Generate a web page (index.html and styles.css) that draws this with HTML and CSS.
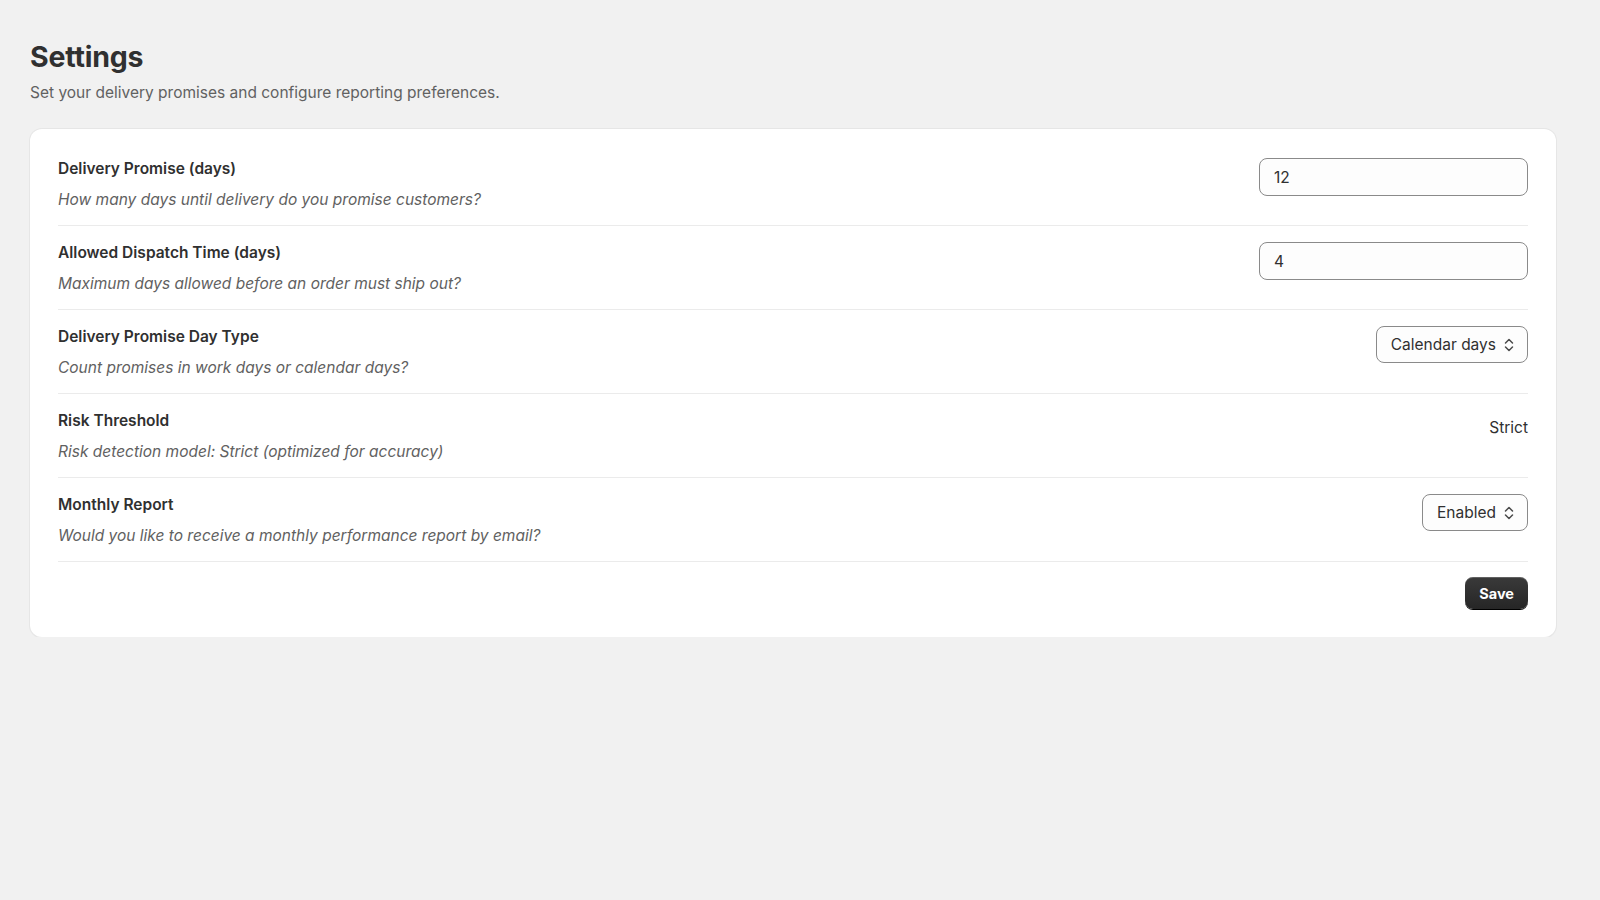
FILE: index.html
```html
<!DOCTYPE html>
<html>
<head>
  <meta charset="UTF-8">
  <title>Settings</title>
  <meta name="viewport" content="width=device-width, initial-scale=1.0">
  <link rel="stylesheet" href="styles.css">
</head>
<body>
  <div class="page">
    <h1>Settings</h1>
    <p class="subtitle">Set your delivery promises and configure reporting preferences.</p>

    <div class="card">
      <div class="row">
        <div class="text">
          <div class="label">Delivery Promise (days)</div>
          <div class="help">How many days until delivery do you promise customers?</div>
        </div>
        <input class="field" type="text" value="12">
      </div>

      <div class="row">
        <div class="text">
          <div class="label">Allowed Dispatch Time (days)</div>
          <div class="help">Maximum days allowed before an order must ship out?</div>
        </div>
        <input class="field" type="text" value="4">
      </div>

      <div class="row">
        <div class="text">
          <div class="label">Delivery Promise Day Type</div>
          <div class="help">Count promises in work days or calendar days?</div>
        </div>
        <button class="select" type="button">Calendar days
          <svg viewBox="0 0 10 14" width="10" height="14"><path d="M1.5 5 5 1.5 8.5 5M1.5 9 5 12.5 8.5 9" fill="none" stroke="#4a4a4a" stroke-width="1.5" stroke-linecap="round" stroke-linejoin="round"/></svg>
        </button>
      </div>

      <div class="row">
        <div class="text">
          <div class="label">Risk Threshold</div>
          <div class="help">Risk detection model: Strict (optimized for accuracy)</div>
        </div>
        <div class="value">Strict</div>
      </div>

      <div class="row">
        <div class="text">
          <div class="label">Monthly Report</div>
          <div class="help">Would you like to receive a monthly performance report by email?</div>
        </div>
        <button class="select" type="button">Enabled
          <svg viewBox="0 0 10 14" width="10" height="14"><path d="M1.5 5 5 1.5 8.5 5M1.5 9 5 12.5 8.5 9" fill="none" stroke="#4a4a4a" stroke-width="1.5" stroke-linecap="round" stroke-linejoin="round"/></svg>
        </button>
      </div>

      <div class="actions">
        <button class="save" type="button">Save</button>
      </div>
    </div>
  </div>
</body>
</html>
```

FILE: styles.css
```css
body { margin: 0; background: #f1f1f1; font-family: Inter, "Noto Sans", sans-serif; color: #303030; }
.page { padding: 37px 44px 0 30px; }
h1 { margin: 0; font-size: 28.5px; font-weight: 700; line-height: 40px; letter-spacing: -0.2px; }
.subtitle { margin: 6px 0 26px; font-size: 15.5px; line-height: 20px; color: #616161; }

.card { background: #fff; border-radius: 12px; padding: 14px 28px 28px; box-shadow: 0 0 0 1px #e6e6e6, 0 1px 2px rgba(0,0,0,0.06); }
.row { display: flex; justify-content: space-between; align-items: flex-start; padding: 16px 0 15px; border-bottom: 1px solid #ebebeb; }
.row + .row { padding-top: 17px; }
.text { display: flex; flex-direction: column; gap: 11px; }
.label { font-size: 15.5px; line-height: 20px; font-weight: 600; color: #303030; }
.help { font-size: 15.5px; line-height: 20px; font-style: italic; color: #616161; }

.field { width: 269px; height: 38px; box-sizing: border-box; margin-top: -1px; padding: 0 14px; border: 1px solid #8a8a8a; border-radius: 8px; background: #fdfdfd; font: 15.5px Inter, sans-serif; color: #303030; }
.select { display: flex; align-items: center; gap: 8px; height: 37px; box-sizing: border-box; margin-top: -1px; padding: 0 13px 0 14px; border: 1px solid #8a8a8a; border-radius: 8px; background: #fdfdfd; font: 15.5px Inter, sans-serif; color: #303030; }
.value { font-size: 15.5px; line-height: 20px; padding-top: 7px; color: #303030; }

.actions { display: flex; justify-content: flex-end; padding-top: 15px; }
.save { height: 32px; padding: 0 14px; border: none; border-radius: 8px; background: linear-gradient(#3a3a3a, #262626); box-shadow: 0 1px 0 #000, inset 0 1px 0 rgba(255,255,255,0.2); color: #fff; font: 700 14.5px Inter, sans-serif; }
```
